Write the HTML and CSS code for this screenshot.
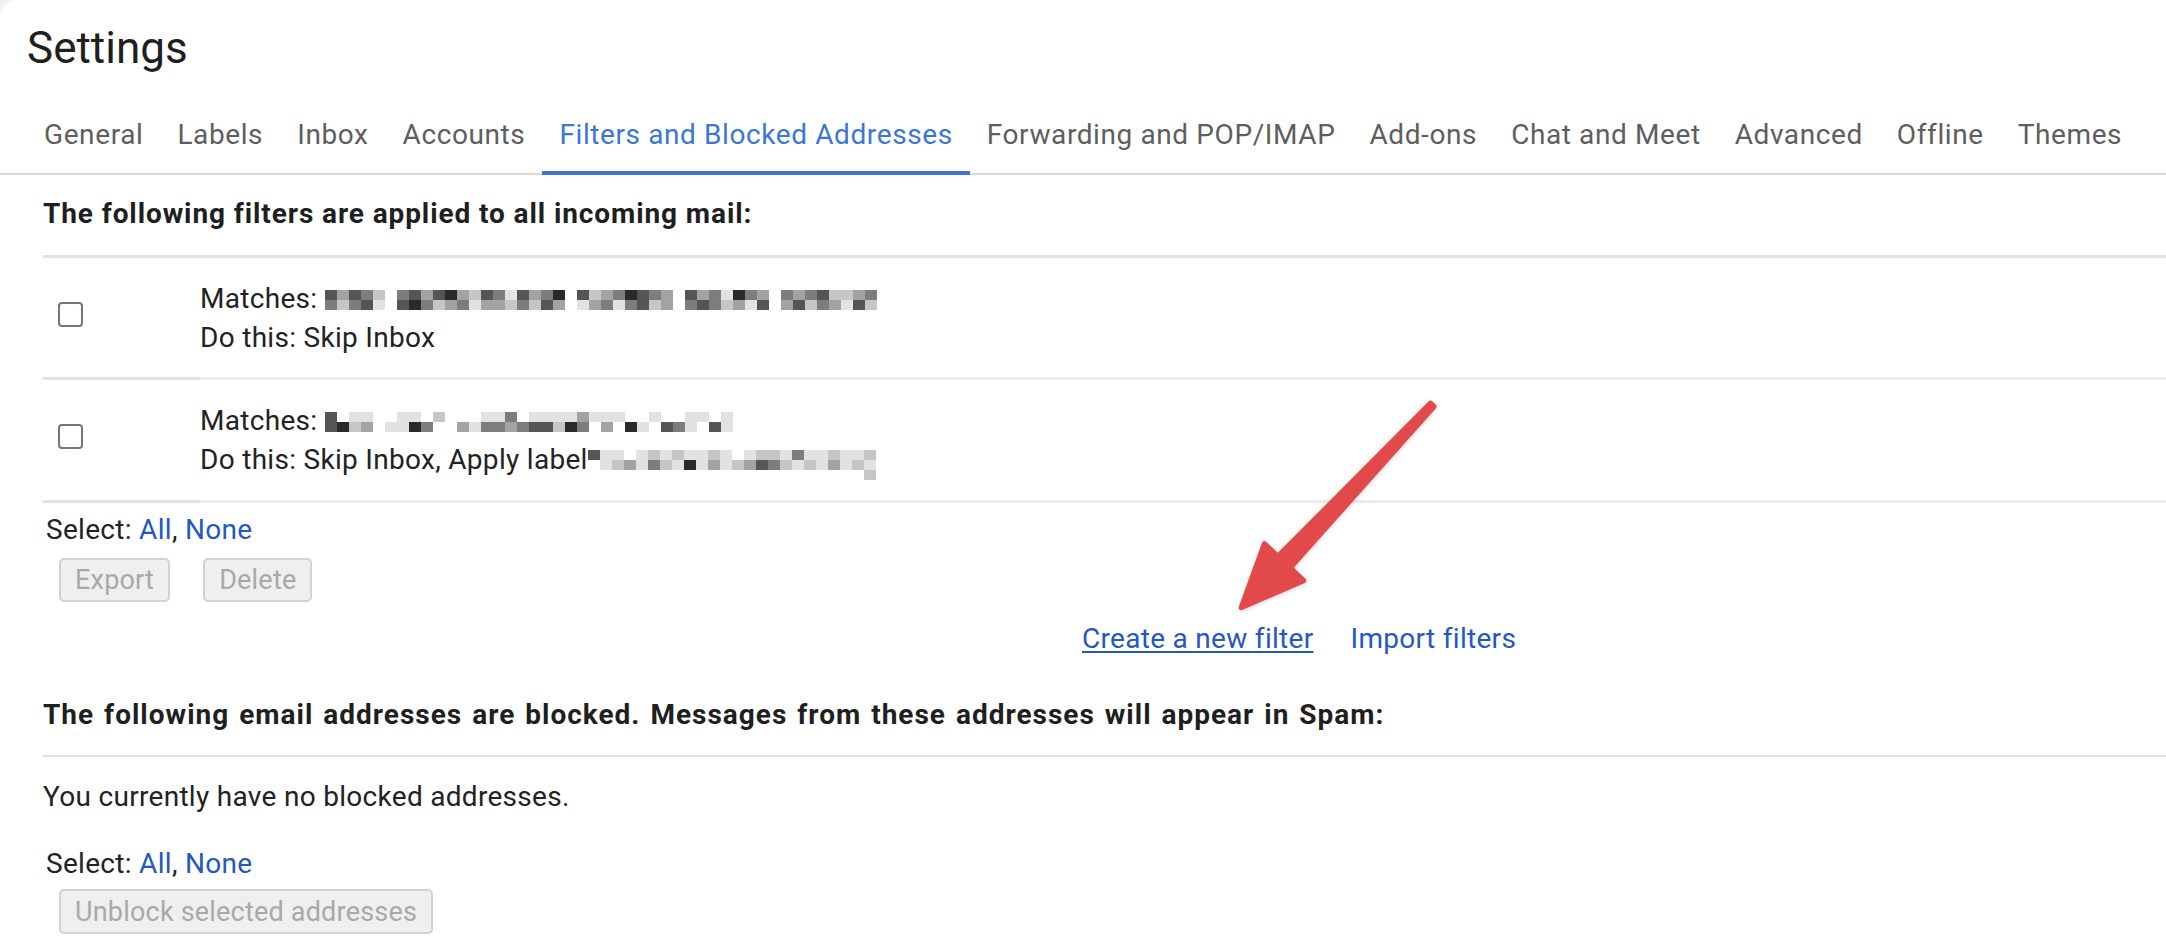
FILE: index.html
```html
<!DOCTYPE html>
<html lang="en">
<head>
<meta charset="utf-8">
<title>Settings</title>
<link rel="stylesheet" href="styles.css">
</head>
<body>
<div class="page">
  <h1 class="title">Settings</h1>
  <nav class="tabs">
    <a class="tab">General</a>
    <a class="tab">Labels</a>
    <a class="tab">Inbox</a>
    <a class="tab">Accounts</a>
    <a class="tab active">Filters and Blocked Addresses</a>
    <a class="tab">Forwarding and POP/IMAP</a>
    <a class="tab">Add-ons</a>
    <a class="tab">Chat and Meet</a>
    <a class="tab">Advanced</a>
    <a class="tab">Offline</a>
    <a class="tab">Themes</a>
  </nav>

  <section class="content">
    <h2 class="heading">The following filters are applied to all incoming mail:</h2>
    <div class="filters">
      <div class="filter-row">
        <div class="cb-cell"><span class="checkbox"></span></div>
        <div class="text-cell">
          <div>Matches: <span class="mosaic m1"><span class="mgrid"><i class="k2"></i><i class="k4"></i><i class="k2"></i><i class="k3"></i><i class="k5"></i><i class="k0"></i><i class="k3"></i><i class="k2"></i><i class="k4"></i><i class="k2"></i><i class="k1"></i><i class="k4"></i><i class="k5"></i><i class="k2"></i><i class="k3"></i><i class="k6"></i><i class="k2"></i><i class="k4"></i><i class="k3"></i><i class="k1"></i><i class="k0"></i><i class="k2"></i><i class="k5"></i><i class="k4"></i><i class="k3"></i><i class="k1"></i><i class="k2"></i><i class="k3"></i><i class="k4"></i><i class="k0"></i><i class="k2"></i><i class="k4"></i><i class="k3"></i><i class="k6"></i><i class="k1"></i><i class="k3"></i><i class="k4"></i><i class="k0"></i><i class="k3"></i><i class="k4"></i><i class="k3"></i><i class="k2"></i><i class="k5"></i><i class="k5"></i><i class="k4"></i><i class="k3"></i><i class="k3"></i><i class="k5"></i><i class="k3"></i><i class="k2"></i><i class="k6"></i><i class="k0"></i><i class="k2"></i><i class="k1"></i><i class="k3"></i><i class="k5"></i><i class="k4"></i><i class="k3"></i><i class="k6"></i><i class="k4"></i><i class="k4"></i><i class="k5"></i><i class="k3"></i><i class="k5"></i><i class="k2"></i><i class="k4"></i><i class="k0"></i><i class="k6"></i><i class="k4"></i><i class="k3"></i><i class="k6"></i><i class="k3"></i><i class="k2"></i><i class="k5"></i><i class="k4"></i><i class="k0"></i><i class="k3"></i><i class="k2"></i><i class="k3"></i><i class="k5"></i><i class="k4"></i><i class="k6"></i><i class="k2"></i><i class="k0"></i><i class="k4"></i><i class="k2"></i><i class="k5"></i><i class="k3"></i><i class="k4"></i><i class="k6"></i><i class="k2"></i><i class="k5"></i></span></span></div>
          <div>Do this: Skip Inbox</div>
        </div>
      </div>
      <div class="filter-row">
        <div class="cb-cell"><span class="checkbox"></span></div>
        <div class="text-cell">
          <div>Matches: <span class="mosaic m2"><span class="mgrid"><i class="k2"></i><i class="k0"></i><i class="k6"></i><i class="k6"></i><i class="k0"></i><i class="k0"></i><i class="k6"></i><i class="k6"></i><i class="k0"></i><i class="k5"></i><i class="k0"></i><i class="k0"></i><i class="k0"></i><i class="k6"></i><i class="k6"></i><i class="k3"></i><i class="k0"></i><i class="k6"></i><i class="k6"></i><i class="k6"></i><i class="k6"></i><i class="k4"></i><i class="k6"></i><i class="k6"></i><i class="k6"></i><i class="k0"></i><i class="k0"></i><i class="k6"></i><i class="k0"></i><i class="k0"></i><i class="k6"></i><i class="k6"></i><i class="k0"></i><i class="k6"></i><i class="k2"></i><i class="k1"></i><i class="k5"></i><i class="k4"></i><i class="k0"></i><i class="k6"></i><i class="k6"></i><i class="k1"></i><i class="k3"></i><i class="k0"></i><i class="k0"></i><i class="k4"></i><i class="k6"></i><i class="k3"></i><i class="k3"></i><i class="k4"></i><i class="k3"></i><i class="k2"></i><i class="k2"></i><i class="k5"></i><i class="k1"></i><i class="k3"></i><i class="k0"></i><i class="k4"></i><i class="k0"></i><i class="k1"></i><i class="k6"></i><i class="k0"></i><i class="k2"></i><i class="k3"></i><i class="k6"></i><i class="k0"></i><i class="k2"></i><i class="k6"></i></span></span></div>
          <div>Do this: Skip Inbox, Apply label<span class="mosaic m3"><span class="mgrid"><i class="k2"></i><i class="k6"></i><i class="k6"></i><i class="k0"></i><i class="k6"></i><i class="k5"></i><i class="k6"></i><i class="k5"></i><i class="k6"></i><i class="k6"></i><i class="k5"></i><i class="k6"></i><i class="k0"></i><i class="k6"></i><i class="k5"></i><i class="k5"></i><i class="k6"></i><i class="k3"></i><i class="k6"></i><i class="k6"></i><i class="k5"></i><i class="k6"></i><i class="k6"></i><i class="k5"></i><i class="k0"></i><i class="k6"></i><i class="k5"></i><i class="k4"></i><i class="k6"></i><i class="k3"></i><i class="k5"></i><i class="k6"></i><i class="k1"></i><i class="k6"></i><i class="k4"></i><i class="k6"></i><i class="k5"></i><i class="k4"></i><i class="k2"></i><i class="k3"></i><i class="k5"></i><i class="k6"></i><i class="k5"></i><i class="k6"></i><i class="k4"></i><i class="k6"></i><i class="k5"></i><i class="k6"></i><i class="k5 tail"></i></span></span></div>
        </div>
      </div>
    </div>

    <div class="select-line">Select: <a class="link">All</a>, <a class="link">None</a></div>
    <div class="buttons">
      <button class="btn" disabled>Export</button>
      <button class="btn" disabled>Delete</button>
    </div>

    <div class="filter-actions">
      <a class="link underlined">Create a new filter</a>
      <a class="link">Import filters</a>
    </div>

    <h2 class="heading heading-blocked">The following email addresses are blocked. Messages from these addresses will appear in Spam:</h2>
    <p class="empty">You currently have no blocked addresses.</p>
    <div class="select-line select-blocked">Select: <a class="link">All</a>, <a class="link">None</a></div>
    <div class="buttons buttons-blocked">
      <button class="btn btn-tall" disabled>Unblock selected addresses</button>
    </div>
  </section>

  <svg class="arrow" viewBox="1220 390 240 240" width="240" height="240" aria-hidden="true">
    <polygon points="1430.5,403.1 1277.9,556.3 1264.4,543.6 1241.2,607.6 1303.8,580.6 1290.3,567.9 1434.1,406.5" fill="#e2494b" stroke="#e2494b" stroke-width="5" stroke-linejoin="round"/>
  </svg>
</div>
</body>
</html>
```

FILE: styles.css
```css
html, body {
  margin: 0;
  height: 100%;
}

body {
  background: #eef1f5;
  font-family: Roboto, "Liberation Sans", Arial, sans-serif;
  color: #222;
  overflow: hidden;
}

.page {
  position: relative;
  background: #fff;
  border-top-left-radius: 18px;
  height: 940px;
}

.title {
  margin: 0;
  padding: 27px 0 0 27px;
  font-size: 44px;
  line-height: 43px;
  font-weight: 400;
  color: #1f1f1f;
}

.tabs {
  display: flex;
  margin-top: 30px;
  padding-left: 27px;
  border-bottom: 2px solid #d9d9d9;
}

.tab {
  padding: 15px 17px 16px;
  margin-bottom: -2px;
  font-size: 28px;
  line-height: 40px;
  color: #5e5e5e;
  border-bottom: 4px solid transparent;
  letter-spacing: 0.6px;
  white-space: nowrap;
}

.tab.active {
  color: #3a76d6;
  border-bottom-color: #3c74d0;
}

.content {
  padding-left: 43px;
  letter-spacing: 0.3px;
}

.heading {
  margin: 0;
  padding: 19px 0 21px;
  font-size: 28px;
  line-height: 40px;
  font-weight: 700;
  letter-spacing: 0.9px;
  color: #1f1f1f;
}

.filters {
  border-top: 3px solid #e3e3e3;
}

.filter-row {
  display: flex;
}

.cb-cell {
  flex: none;
  width: 157px;
  box-sizing: border-box;
  padding: 44px 0 0 15px;
  border-bottom: 3px solid #e2e2e2;
}

.checkbox {
  display: block;
  width: 25px;
  height: 25px;
  box-sizing: border-box;
  border: 2px solid #767676;
  border-radius: 4px;
}

.text-cell {
  flex: 1;
  padding: 21px 0 20px;
  font-size: 28px;
  line-height: 39px;
  border-bottom: 3px solid #ececec;
}

.mosaic {
  display: inline-block;
  overflow: hidden;
  vertical-align: -2px;
}

.mgrid {
  display: grid;
  grid-auto-rows: 10px;
}

.m1 .mgrid { grid-template-columns: repeat(46, 12px); }
.m2 .mgrid { grid-template-columns: repeat(34, 12px); }
.m3 .mgrid { grid-template-columns: repeat(24, 12px); }
.m3 { vertical-align: -11px; }
.m3 .tail { grid-column: 24; grid-row: 3; }

.k0 { background: transparent; }
.k1 { background: #2a2a2a; }
.k2 { background: #555; }
.k3 { background: #7d7d7d; }
.k4 { background: #a3a3a3; }
.k5 { background: #c6c6c6; }
.k6 { background: #e2e2e2; }

.select-line {
  margin-top: 7px;
  padding-left: 3px;
  font-size: 28px;
  line-height: 39px;
}

.link {
  color: #2357c4;
  cursor: pointer;
}

.underlined {
  text-decoration: underline;
  text-underline-offset: 3px;
}

.buttons {
  display: flex;
  gap: 33px;
  margin-top: 9px;
  padding-left: 16px;
}

.btn {
  height: 44px;
  box-sizing: border-box;
  padding: 0 14px;
  border: 2px solid #d2d2d2;
  border-radius: 5px;
  background: #efefef;
  color: #a9a9a9;
  font-family: Roboto, "Liberation Sans", Arial, sans-serif;
  font-size: 27px;
  line-height: 40px;
  letter-spacing: 0.2px;
}

.btn-tall {
  height: 45px;
}

.filter-actions {
  display: flex;
  gap: 37px;
  margin-top: 17px;
  padding-left: 1039px;
  font-size: 28px;
  line-height: 39px;
}

.heading-blocked {
  padding: 37px 0 20px;
  border-bottom: 2px solid #e3e3e3;
  word-spacing: 2px;
  letter-spacing: 1px;
}

.empty {
  margin: 20px 0 0;
  font-size: 28px;
  line-height: 39px;
}

.select-blocked {
  margin-top: 28px;
}

.buttons-blocked {
  margin-top: 6px;
}

.arrow {
  position: absolute;
  left: 1220px;
  top: 390px;
  filter: drop-shadow(0 1px 2px rgba(0, 0, 0, 0.18));
}
```
